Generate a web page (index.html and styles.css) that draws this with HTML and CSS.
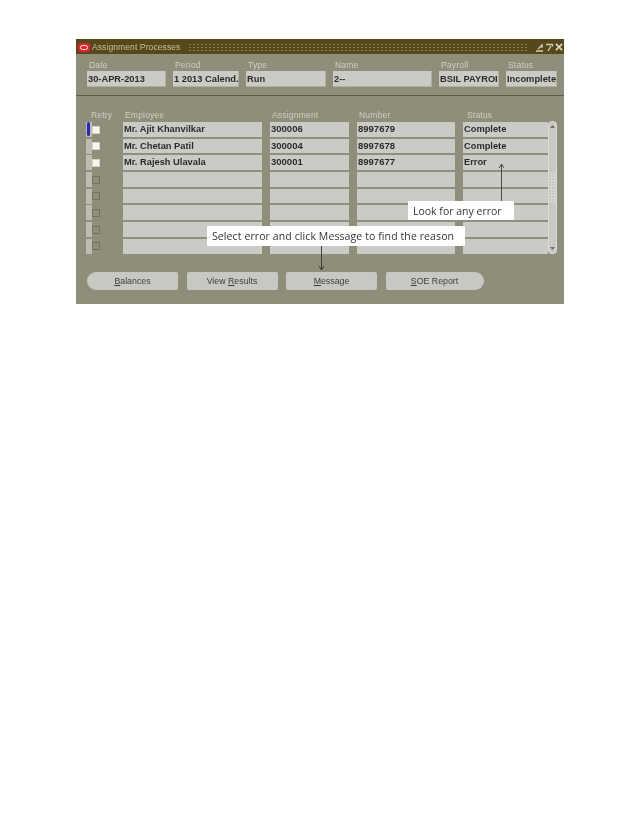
FILE: index.html
```html
<!DOCTYPE html>
<html lang="en">
<head>
<meta charset="utf-8">
<title>Assignment Processes</title>
<link rel="stylesheet" href="styles.css">
</head>
<body>
<main class="window">
  <header class="titlebar">
    <span class="logo"><span class="logo-ring"></span></span>
    <span class="title">Assignment Processes</span>
    <span class="pattern"></span>
    <span class="win-icons">
      <svg width="9" height="9" viewBox="0 0 9 9"><path d="M1 8h7M3 6l4-4M7 1v4" stroke="#d0cfb8" stroke-width="1.300" fill="none"/></svg>
      <svg width="9" height="9" viewBox="0 0 9 9"><path d="M1 1.500h7M7.500 1.500v2M3 8l3-5" stroke="#d0cfb8" stroke-width="1.300" fill="none"/></svg>
      <svg width="8" height="8" viewBox="0 0 9 9"><path d="M1 1l7 7M8 1L1 8" stroke="#dcdccc" stroke-width="1.700" fill="none"/></svg>
    </span>
  </header>

  <section class="summary">
    <div class="summary-col"><span class="label">Date</span><span class="field">30-APR-2013</span></div>
    <div class="summary-col"><span class="label">Period</span><span class="field">1 2013 Calend.</span></div>
    <div class="summary-col"><span class="label">Type</span><span class="field">Run</span></div>
    <div class="summary-col"><span class="label">Name</span><span class="field">2--</span></div>
    <div class="summary-col"><span class="label">Payroll</span><span class="field">BSIL PAYROI</span></div>
    <div class="summary-col"><span class="label">Status</span><span class="field">Incomplete</span></div>
  </section>

  <section class="table">
    <div class="heads">
      <span class="label">Retry</span>
      <span class="label">Employee</span>
      <span class="label">Assignment</span>
      <span class="label">Number</span>
      <span class="label">Status</span>
    </div>
    <div class="body">
      <div class="rows">
        <div class="row current"><span class="retry"><i class="box on"></i></span><span class="cell">Mr. Ajit Khanvilkar</span><span class="cell num">300006</span><span class="cell num">8997679</span><span class="cell">Complete</span></div>
        <div class="row"><span class="retry"><i class="box on"></i></span><span class="cell">Mr. Chetan Patil</span><span class="cell num">300004</span><span class="cell num">8997678</span><span class="cell">Complete</span></div>
        <div class="row"><span class="retry"><i class="box on"></i></span><span class="cell">Mr. Rajesh Ulavala</span><span class="cell num">300001</span><span class="cell num">8997677</span><span class="cell">Error</span></div>
        <div class="row"><span class="retry"><i class="box"></i></span><span class="cell"></span><span class="cell"></span><span class="cell"></span><span class="cell"></span></div>
        <div class="row"><span class="retry"><i class="box"></i></span><span class="cell"></span><span class="cell"></span><span class="cell"></span><span class="cell"></span></div>
        <div class="row"><span class="retry"><i class="box"></i></span><span class="cell"></span><span class="cell"></span><span class="cell"></span><span class="cell"></span></div>
        <div class="row"><span class="retry"><i class="box"></i></span><span class="cell"></span><span class="cell"></span><span class="cell"></span><span class="cell"></span></div>
        <div class="row"><span class="retry"><i class="box"></i></span><span class="cell"></span><span class="cell"></span><span class="cell"></span><span class="cell"></span></div>
      </div>
      <div class="scrollbar">
        <svg width="9" height="8" viewBox="0 0 9 8"><path d="M2 6l2.500-3 2.500 3z" fill="#6f6f64"/></svg>
        <span class="thumb"></span>
        <svg width="9" height="8" viewBox="0 0 9 8"><path d="M2 2l2.500 3 2.500-3z" fill="#6f6f64"/></svg>
      </div>
    </div>
  </section>

  <nav class="buttons">
    <button class="btn btn-first"><u>B</u>alances</button>
    <button class="btn">View <u>R</u>esults</button>
    <button class="btn"><u>M</u>essage</button>
    <button class="btn btn-last"><u>S</u>OE Report</button>
  </nav>

  <svg class="arrow arrow-up" width="7" height="40" viewBox="0 0 7 40"><path d="M3.500 1V40M1 5l2.500-4L6 5" stroke="#4e4e46" stroke-width="1" fill="none"/></svg>
  <svg class="arrow arrow-down" width="7" height="26" viewBox="0 0 7 26"><path d="M3.500 0V25M1 21l2.500 4L6 21" stroke="#3e3e36" stroke-width="1" fill="none"/></svg>
  <div class="callout callout-look">Look for any error</div>
  <div class="callout callout-select">Select error and click Message to find the reason</div>
</main>
</body>
</html>
```
FILE: styles.css
```css
* { box-sizing: border-box; }
html, body { margin: 0; background: #fff; }
body { padding: 39px 74px 0 76px; height: 826px; overflow: hidden; }

.window {
  position: relative;
  width: 488px;
  height: 265px;
  background: #8e8e7b;
  font-family: "Liberation Sans", Arial, sans-serif;
}

.titlebar {
  display: flex;
  align-items: center;
  height: 15px;
  padding: 1px 1px 0 2px;
  background: #564818;
}
.logo {
  display: flex;
  align-items: center;
  justify-content: center;
  flex: none;
  width: 12px;
  height: 9px;
  border-radius: 3px;
  background: #d9252e;
}
.logo-ring {
  width: 8px;
  height: 5px;
  border: 1.500px solid #f6e4e0;
  border-radius: 3px;
}
.title {
  flex: none;
  margin-left: 2px;
  font-size: 8.500px;
  letter-spacing: 0.1px;
  color: #c4c2a4;
  filter: blur(0.4px);
}
.pattern {
  flex: 1;
  height: 9px;
  margin: 0 6px 0 8px;
  background-image: radial-gradient(circle, #8a8250 0.8px, transparent 1.100px);
  background-size: 4px 3px;
  filter: blur(0.3px);
}
.win-icons { display: flex; flex: none; gap: 1px; align-items: center; filter: blur(0.3px); }

.label {
  display: block;
  font-size: 8.500px;
  line-height: 10px;
  color: #cfcfbf;
  letter-spacing: 0.2px;
  filter: blur(0.4px);
}

.summary {
  display: grid;
  grid-template-columns: 79px 66px 80px 99px 60px 51px;
  column-gap: 7px;
  height: 41px;
  margin-left: 11px;
  padding-top: 6px;
}
.summary-col .label { padding-left: 2px; height: 11px; }
.field {
  display: block;
  height: 16px;
  padding-left: 1px;
  background: #cbcbc6;
  box-shadow: inset -1px -1px 0 #b0b0a6;
  font-size: 9.300px;
  line-height: 16px;
  font-weight: 700;
  white-space: nowrap;
  overflow: hidden;
  color: #2b2b2b;
  filter: blur(0.3px);
}

.table {
  padding-top: 14px;
  border-top: 1px solid #5d5d4d;
}
.heads {
  display: grid;
  grid-template-columns: 34px 147px 87px 108px 60px;
  height: 11px;
  margin-left: 15px;
}

.body {
  display: flex;
  align-items: flex-start;
  margin-left: 10px;
  margin-top: 1px;
}
.rows {
  display: flex;
  flex-direction: column;
  width: 462px;
}
.row {
  display: grid;
  grid-template-columns: 29px 139px 79px 98px 85px;
  column-gap: 8px;
  height: 16.700px;
}
.retry {
  position: relative;
  display: flex;
  align-items: center;
  padding-left: 6px;
  height: 15px;
  background: linear-gradient(to right, #bcbcb0 0, #bcbcb0 6px, transparent 6px);
}
.current .retry::before {
  content: "";
  position: absolute;
  left: 1px;
  top: 0;
  bottom: 1px;
  width: 3px;
  border-radius: 2px;
  background: #2528b8;
}
.box {
  display: block;
  width: 8px;
  height: 8px;
  background: #8e8e7b;
  border: 1px solid #72725f;
}
.box.on {
  background: #f7f7f0;
  border-color: #d4d4c8;
}
.cell {
  display: block;
  height: 100%;
  padding-left: 1px;
  background: #cbcbc6;
  border-bottom: 2px solid #8f8f7e;
  font-size: 9.300px;
  font-weight: 700;
  line-height: 14px;
  color: #2b2b2b;
  white-space: nowrap;
  filter: blur(0.3px);
}
.cell.num { font-size: 9.500px; }

.scrollbar {
  display: flex;
  flex-direction: column;
  justify-content: space-between;
  align-items: center;
  flex: none;
  width: 9px;
  height: 133px;
  margin-top: -1px;
  border-radius: 4px;
  background: #c8c8c4;
  border: 1px solid #dcdcd6;
}
.thumb {
  width: 6px;
  height: 30px;
  background-image: radial-gradient(circle, #e6e6e2 0.8px, transparent 1.100px);
  background-size: 3px 3px;
}

.buttons {
  display: flex;
  gap: 8.500px;
  margin: 16px 0 0 11px;
}
.btn {
  width: 91px;
  height: 18px;
  padding: 0;
  border: 0;
  border-radius: 2px;
  background: #c8c8c3;
  font-family: inherit;
  font-size: 8.800px;
  color: #3c3c3c;
  filter: blur(0.3px);
}
.btn-first { border-radius: 9px 2px 2px 9px; }
.btn-last { width: 98px; border-radius: 2px 9px 9px 2px; }

.callout {
  position: absolute;
  display: flex;
  align-items: center;
  background: #fff;
  font-family: "Open Sans", sans-serif;
  font-size: 10.500px;
  color: #333;
  white-space: nowrap;
  filter: blur(0.2px);
}
.callout-look { left: 332px; top: 162px; width: 106px; height: 19px; padding-left: 5px; }
.callout-select { left: 131px; top: 186.500px; width: 258px; height: 20px; padding-left: 5px; letter-spacing: 0.1px; }

.arrow { position: absolute; }
.arrow-up { left: 422px; top: 124px; }
.arrow-down { left: 242px; top: 206px; }
```
